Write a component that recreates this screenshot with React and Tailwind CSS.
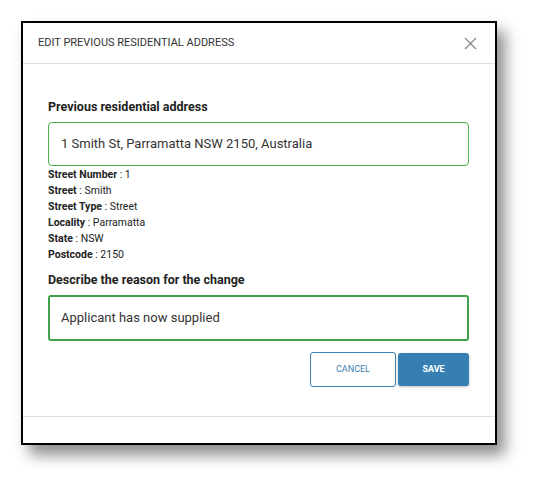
export default function App() {
  const details = [
    ["Street Number", "1"],
    ["Street", "Smith"],
    ["Street Type", "Street"],
    ["Locality", "Parramatta"],
    ["State", "NSW"],
    ["Postcode", "2150"],
  ];

  return (
    <div className="min-h-[488px] w-[539px] bg-white pl-[21px] pt-[21px] font-['Roboto',sans-serif] text-[#222]">
      <div className="flex h-[424px] w-[476px] flex-col border-2 border-black bg-white shadow-[8px_10px_14px_rgba(0,0,0,0.45)]">
        <header className="flex h-[41px] shrink-0 items-center justify-between border-b border-[#dedede] pl-[15px] pr-[18px]">
          <h1 className="text-[11px] uppercase text-[#333]">Edit previous residential address</h1>
          <svg width="13" height="13" viewBox="0 0 13 13" className="text-[#888]">
            <path d="M1 1L12 12M12 1L1 12" stroke="currentColor" strokeWidth="1.3" fill="none" />
          </svg>
        </header>

        <div className="flex flex-col border-b border-[#dedede] pb-[29px] pl-[25px] pr-[26px] pt-[35px]">
          <label className="text-[12.5px] font-bold leading-[16px]">Previous residential address</label>
          <div className="mt-[7px] flex h-[44px] items-center rounded-[4px] border border-[#4cae4c] pl-[12px] text-[13px] text-[#333]">
            1 Smith St, Parramatta NSW 2150, Australia
          </div>
          <div className="mt-[1px] flex flex-col text-[10.5px] leading-[16px] text-[#222]">
            {details.map(([k, v]) => (
              <p key={k}>
                <span className="font-bold">{k}</span> : {v}
              </p>
            ))}
          </div>
          <label className="mt-[9px] text-[12.5px] font-bold leading-[16px]">Describe the reason for the change</label>
          <div className="mt-[7px] flex h-[46px] items-center rounded-[3px] border-2 border-[#3fa14a] pl-[11px] text-[13px] text-[#333]">
            Applicant has now supplied
          </div>
          <div className="mt-[11px] flex justify-end gap-[2px]">
            <button className="h-[35px] w-[86px] rounded-[3px] border border-[#3a80b5] bg-white text-[9px] uppercase text-[#3a80b5]">
              Cancel
            </button>
            <button className="mt-[1px] h-[33px] w-[71px] rounded-[3px] bg-[#357fb3] text-[9px] font-bold uppercase text-white shadow-[0_1px_3px_rgba(0,0,0,0.25)]">
              Save
            </button>
          </div>
        </div>
        <div className="flex-1" />
      </div>
    </div>
  );
}
